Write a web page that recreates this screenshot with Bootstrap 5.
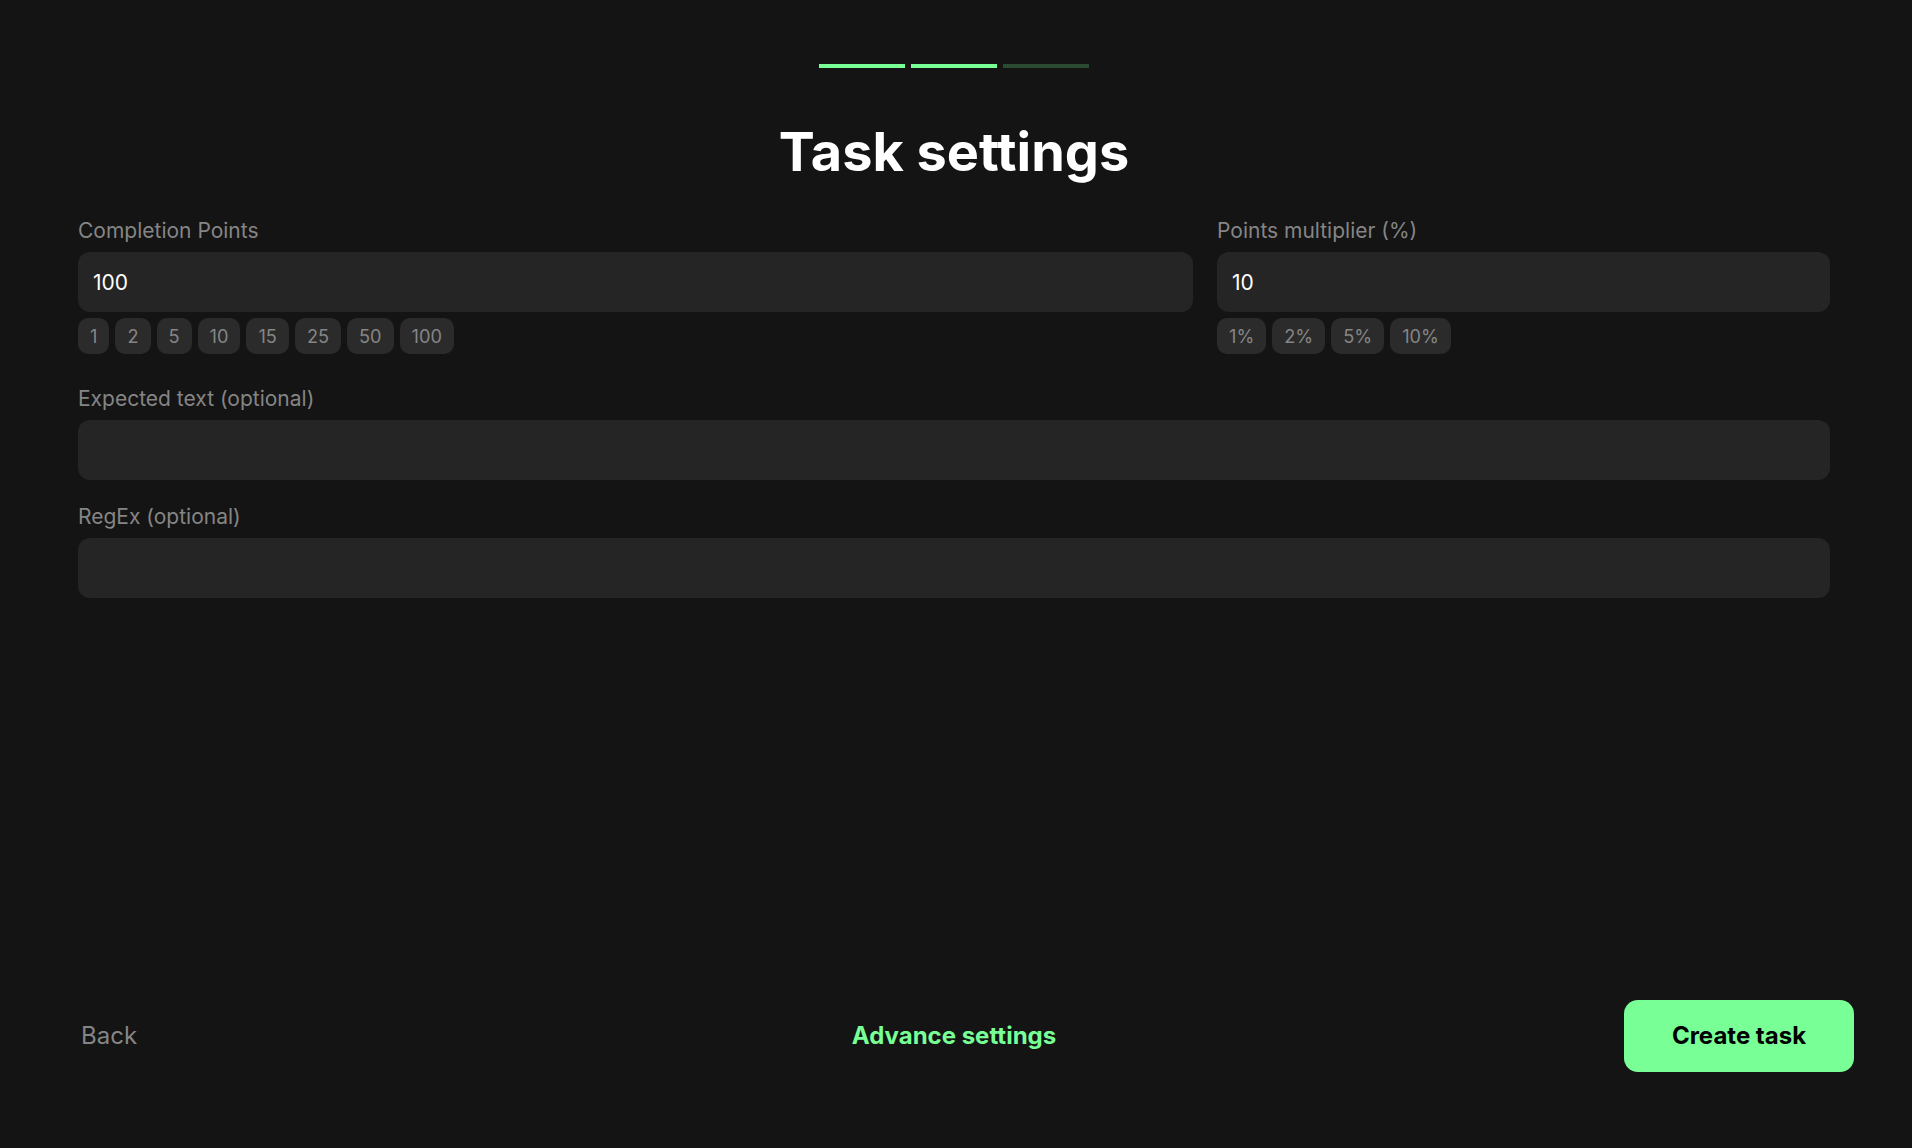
<!DOCTYPE html>
<html lang="en">

<head>
    <meta charset="UTF-8">
    <meta name="viewport" content="width=device-width, initial-scale=1.0">
    <title>Task settings</title>
    <link href="https://cdn.jsdelivr.net/npm/bootstrap@5.3.0/dist/css/bootstrap.min.css" rel="stylesheet">
    <style>
        body {
            background-color: #141414;
            font-family: "Inter", "Liberation Sans", sans-serif;
            height: 1148px;
        }

        .head-area {
            padding-right: 4px;
        }

        .step-wrap {
            width: 270px;
            padding-top: 64px;
            gap: 6px;
        }

        .step-bar {
            height: 4px;
            background-color: #78ff96;
        }

        .step-bar.step-off {
            background-color: #2a4a31;
        }

        .page-title {
            color: #fff;
            font-size: 54px;
            font-weight: 700;
            line-height: 68px;
            margin: 50px 0 30px;
        }

        .form-area {
            padding: 0 82px 0 78px;
        }

        .fields-grid {
            display: grid;
            grid-template-columns: 1115fr 613fr;
            column-gap: 24px;
            margin-bottom: 30px;
        }

        .field-label {
            color: #858585;
            font-size: 21px;
            line-height: 30px;
            margin-bottom: 6px;
        }

        .field-input.form-control {
            background-color: #252525;
            border: 0;
            border-radius: 12px;
            color: #fff;
            font-size: 21px;
            height: 60px;
            padding: 0 15px;
        }

        .field-input.form-control:focus {
            background-color: #252525;
            box-shadow: none;
            color: #fff;
        }

        .field-gap {
            margin-bottom: 22px;
        }

        .chip-row {
            margin-top: 6px;
            gap: 6px;
        }

        .chip-btn.btn {
            --bs-btn-bg: #2b2b2b;
            --bs-btn-color: #858585;
            --bs-btn-hover-bg: #333;
            --bs-btn-hover-color: #999;
            --bs-btn-border-width: 0;
            border-radius: 10px;
            font-size: 18.2px;
            line-height: 35px;
            height: 36px;
            padding: 0 12px;
        }

        .foot-bar {
            display: grid;
            grid-template-columns: 1fr auto 1fr;
            align-items: center;
            padding: 0 58px 76px 54px;
        }

        .foot-link.btn {
            --bs-btn-border-width: 0;
            --bs-btn-color: #858585;
            --bs-btn-hover-color: #999;
            font-size: 24px;
            padding: 0 27px;
        }

        .foot-link.foot-adv {
            --bs-btn-color: #78ff96;
            --bs-btn-hover-color: #78ff96;
            font-weight: 700;
            padding: 0;
        }

        .create-btn.btn {
            --bs-btn-bg: #78ff96;
            --bs-btn-color: #000;
            --bs-btn-hover-bg: #6cf08a;
            --bs-btn-hover-color: #000;
            --bs-btn-border-width: 0;
            border-radius: 14px;
            font-size: 24px;
            font-weight: 700;
            height: 72px;
            width: 230px;
        }
    </style>
</head>

<body class="d-flex flex-column">
    <div class="head-area">
        <!-- Step indicator -->
        <div class="step-wrap d-flex mx-auto">
            <div class="step-bar flex-fill"></div>
            <div class="step-bar flex-fill"></div>
            <div class="step-bar step-off flex-fill"></div>
        </div>

        <h1 class="page-title text-center">Task settings</h1>
    </div>

    <!-- Fields -->
    <form class="form-area flex-grow-1">
        <div class="fields-grid">
            <div>
                <label class="field-label d-block" for="points">Completion Points</label>
                <input type="text" id="points" class="form-control field-input" value="100">
                <div class="chip-row d-flex">
                    <button type="button" class="btn chip-btn">1</button>
                    <button type="button" class="btn chip-btn">2</button>
                    <button type="button" class="btn chip-btn">5</button>
                    <button type="button" class="btn chip-btn">10</button>
                    <button type="button" class="btn chip-btn">15</button>
                    <button type="button" class="btn chip-btn">25</button>
                    <button type="button" class="btn chip-btn">50</button>
                    <button type="button" class="btn chip-btn">100</button>
                </div>
            </div>
            <div>
                <label class="field-label d-block" for="multiplier">Points multiplier (%)</label>
                <input type="text" id="multiplier" class="form-control field-input" value="10">
                <div class="chip-row d-flex">
                    <button type="button" class="btn chip-btn">1%</button>
                    <button type="button" class="btn chip-btn">2%</button>
                    <button type="button" class="btn chip-btn">5%</button>
                    <button type="button" class="btn chip-btn">10%</button>
                </div>
            </div>
        </div>

        <label class="field-label d-block" for="expected">Expected text (optional)</label>
        <input type="text" id="expected" class="form-control field-input field-gap">

        <label class="field-label d-block" for="regex">RegEx (optional)</label>
        <input type="text" id="regex" class="form-control field-input">
    </form>

    <!-- Footer actions -->
    <div class="foot-bar">
        <div><button type="button" class="btn foot-link">Back</button></div>
        <button type="button" class="btn foot-link foot-adv">Advance settings</button>
        <div class="text-end"><button type="button" class="btn create-btn">Create task</button></div>
    </div>

    <script src="https://cdn.jsdelivr.net/npm/bootstrap@5.3.0/dist/js/bootstrap.bundle.min.js"></script>
</body>

</html>
